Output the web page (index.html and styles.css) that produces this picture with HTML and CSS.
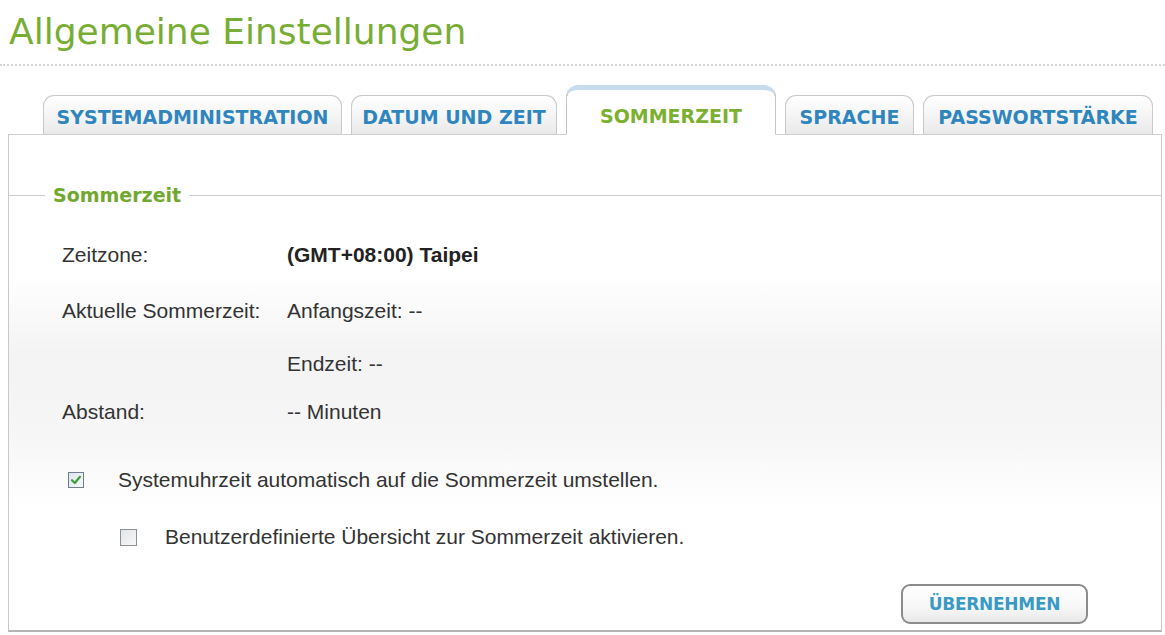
FILE: index.html
```html
<!DOCTYPE html>
<html lang="de">
<head>
<meta charset="utf-8">
<title>Allgemeine Einstellungen</title>
<link rel="stylesheet" href="styles.css">
</head>
<body>
<div class="page">
  <header class="header">
    <h1 class="title">Allgemeine Einstellungen</h1>
  </header>
  <nav class="tabs">
    <div class="tab tab-sys">SYSTEMADMINISTRATION</div>
    <div class="tab tab-date">DATUM UND ZEIT</div>
    <div class="tab tab-active">SOMMERZEIT</div>
    <div class="tab tab-lang">SPRACHE</div>
    <div class="tab tab-pw">PASSWORTSTÄRKE</div>
  </nav>
  <main class="panel">
    <fieldset class="group">
      <legend class="legend">Sommerzeit</legend>
      <div class="rows">
        <div class="label">Zeitzone:</div>
        <div class="value strong">(GMT+08:00) Taipei</div>
        <div class="label">Aktuelle Sommerzeit:</div>
        <div class="value">Anfangszeit: --</div>
        <div class="label"></div>
        <div class="value">Endzeit: --</div>
        <div class="label">Abstand:</div>
        <div class="value">-- Minuten</div>
      </div>
      <div class="check check-main">
        <svg class="box" width="16" height="16" viewBox="0 0 16 16">
          <defs>
            <linearGradient id="g1" x1="0" y1="0" x2="1" y2="1">
              <stop offset="0" stop-color="#dde6ee"/>
              <stop offset="1" stop-color="#f7f9fb"/>
            </linearGradient>
          </defs>
          <rect x="0.5" y="0.5" width="15" height="15" fill="url(#g1)" stroke="#6f7f8e"/>
          <path d="M4 8.2 L6.8 11 L12 4.8" fill="none" stroke="#3e9e3a" stroke-width="2.2" stroke-linecap="round" stroke-linejoin="round"/>
        </svg>
        <span>Systemuhrzeit automatisch auf die Sommerzeit umstellen.</span>
      </div>
      <div class="check check-sub">
        <svg class="box" width="17" height="17" viewBox="0 0 17 17">
          <defs>
            <linearGradient id="g2" x1="0" y1="0" x2="1" y2="1">
              <stop offset="0" stop-color="#e2e4e6"/>
              <stop offset="1" stop-color="#f8f8f8"/>
            </linearGradient>
          </defs>
          <rect x="0.5" y="0.5" width="16" height="16" fill="url(#g2)" stroke="#8a9096"/>
        </svg>
        <span>Benutzerdefinierte Übersicht zur Sommerzeit aktivieren.</span>
      </div>
      <div class="actions">
        <button class="btn" type="button">ÜBERNEHMEN</button>
      </div>
    </fieldset>
  </main>
</div>
</body>
</html>
```
FILE: styles.css
```css
html, body {
  margin: 0;
  padding: 0;
  background: #ffffff;
}
body {
  font-family: "Liberation Sans", Arial, sans-serif;
  color: #333333;
  width: 1165px;
  height: 635px;
  overflow: hidden;
}
.page {
  padding: 0 3px 0 8px;
}
.header {
  height: 66px;
  margin-left: -8px;
  margin-right: -3px;
  border-bottom: 2px dotted #d6d6d6;
  box-sizing: border-box;
  padding: 10px 0 0 9px;
}
.title {
  margin: 0;
  font-family: "DejaVu Sans", Verdana, sans-serif;
  font-weight: normal;
  font-size: 36px;
  line-height: 44px;
  color: #78ad34;
}
.tabs {
  display: flex;
  align-items: flex-end;
  height: 69px;
  padding-left: 35px;
  gap: 9px;
  margin-bottom: -1px;
  position: relative;
  z-index: 1;
}
.tab {
  box-sizing: border-box;
  height: 40px;
  display: flex;
  align-items: center;
  justify-content: center;
  font-family: "DejaVu Sans", Verdana, sans-serif;
  font-weight: bold;
  font-size: 19px;
  color: #2f86bf;
  border: 1px solid #c9c9c9;
  border-bottom: 1px solid #cfcfcf;
  border-radius: 11px 11px 0 0;
  background: linear-gradient(#ffffff 0%, #f4f4f4 55%, #e9e9e9 100%);
  padding-top: 3px;
}
.tab-sys { width: 299px; }
.tab-date { width: 206px; }
.tab-active {
  width: 210px;
  height: 50px;
  color: #7cb030;
  background: #ffffff;
  border: 1px solid #c4c4c4;
  border-top: 5px solid #c8dcee;
  border-bottom: 1px solid #ffffff;
  border-radius: 12px 12px 0 0;
  padding-top: 8px;
}
.tab-lang { width: 129px; }
.tab-pw { width: 230px; }
.panel {
  box-sizing: border-box;
  height: 498px;
  border-top: 1px solid #cfcfcf;
  border-left: 1px solid #c8c8c8;
  border-right: 1px solid #c8c8c8;
  border-bottom: 2px solid #b5b5b5;
  padding-top: 48px;
  background: linear-gradient(#ffffff 0%, #ffffff 28%, #f3f3f3 45%, #f6f6f6 60%, #ffffff 76%, #ffffff 100%);
}
.group {
  margin: 0;
  padding: 0;
  border: none;
  border-top: 1px solid #cdcdcd;
  min-width: 0;
}
.legend {
  margin-left: 36px;
  padding: 0 8px;
  font-family: "DejaVu Sans", Verdana, sans-serif;
  font-weight: bold;
  font-size: 19px;
  line-height: 24px;
  color: #72a82f;
}
.rows {
  display: grid;
  grid-template-columns: 225px 1fr;
  grid-template-rows: 56px 56px 50px 46px;
  align-items: center;
  padding: 20px 0 0 53px;
  font-size: 21px;
}
.strong {
  font-weight: bold;
  color: #222222;
}
.check {
  display: flex;
  align-items: center;
  font-size: 21px;
  height: 30px;
}
.check-main {
  margin-top: 30px;
  padding-left: 59px;
  gap: 34px;
}
.check-sub {
  margin-top: 27px;
  padding-left: 111px;
  gap: 28px;
}
.box {
  flex: none;
}
.actions {
  display: flex;
  justify-content: flex-end;
  padding: 32px 73px 0 0;
}
.btn {
  width: 187px;
  height: 40px;
  border: 2px solid #8c8c8c;
  border-radius: 9px;
  background: linear-gradient(#ffffff 0%, #f7f7f7 60%, #e8e8e8 100%);
  font-family: "DejaVu Sans", Verdana, sans-serif;
  font-weight: bold;
  font-size: 17px;
  color: #3a9ac6;
  letter-spacing: -0.3px;
  cursor: pointer;
  padding: 0;
}
```
